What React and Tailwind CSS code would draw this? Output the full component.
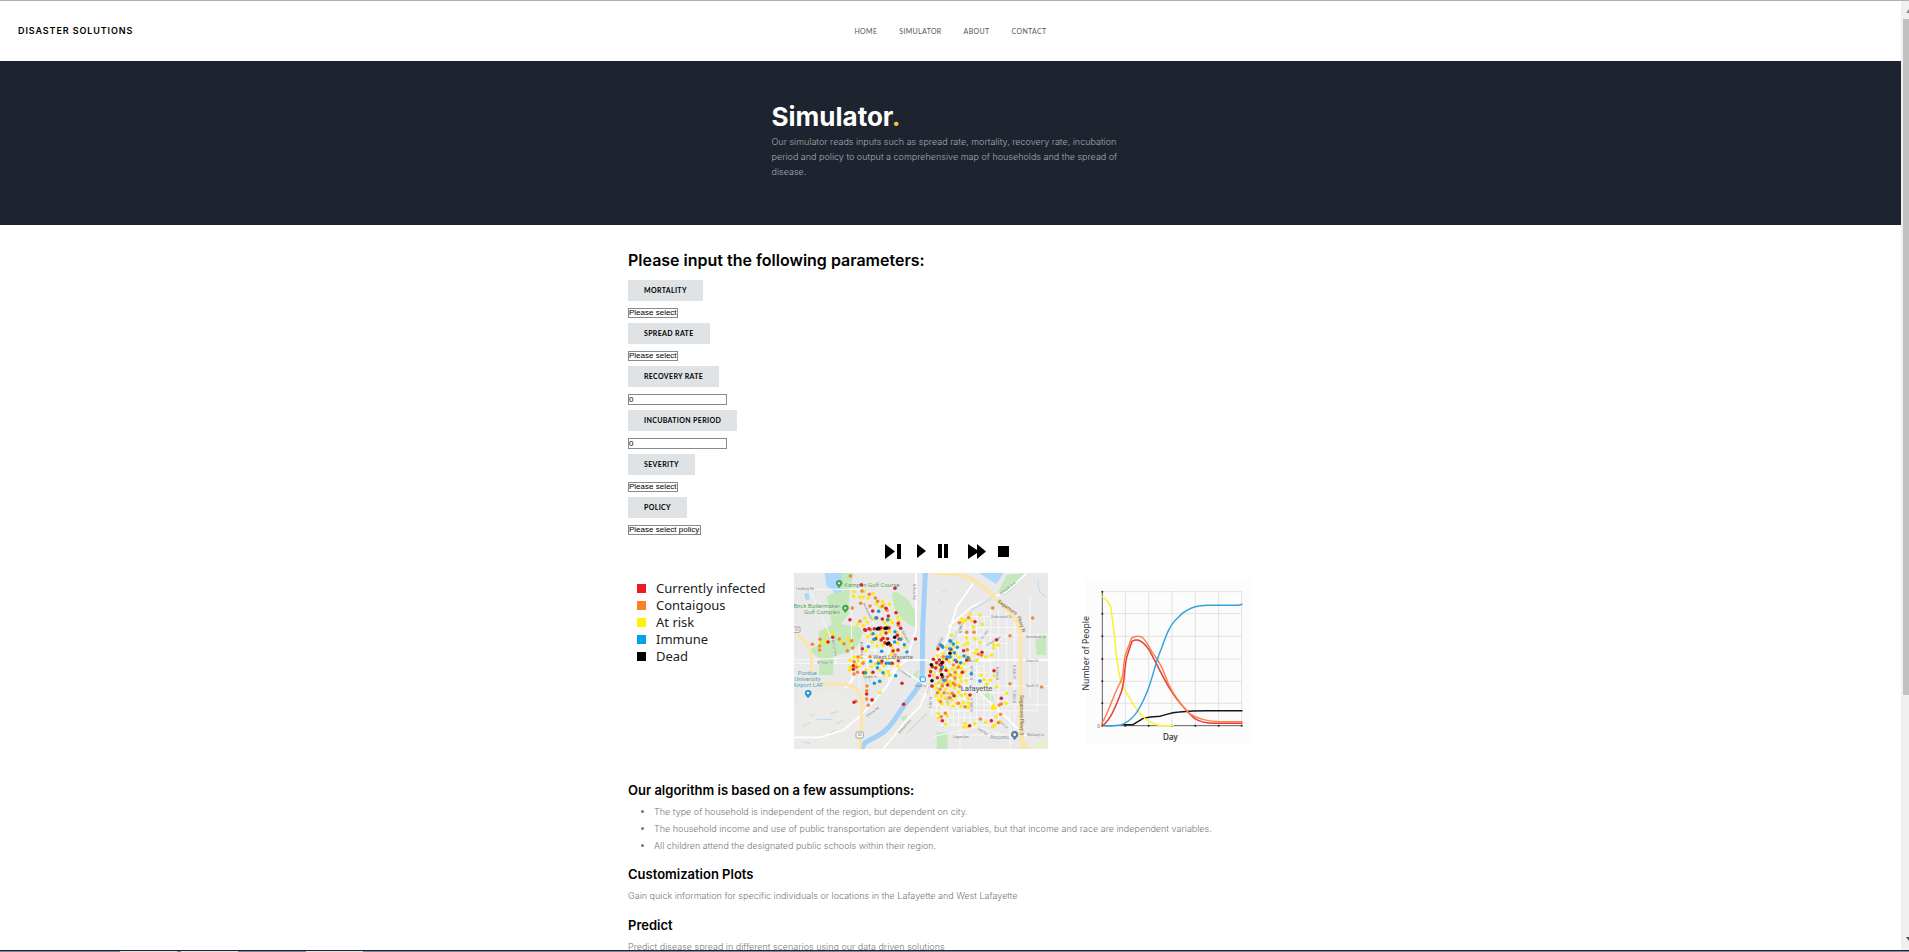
import React from "react";

const NAV = ["Home", "Simulator", "About", "Contact"];

const FIELDS = [
  { id: "mortality", label: "Mortality", placeholder: "Please select" },
  { id: "spread", label: "Spread rate", placeholder: "Please select" },
  { id: "recovery", label: "Recovery rate", value: "0" },
  { id: "incubation", label: "Incubation period", value: "0" },
  { id: "severity", label: "Severity", placeholder: "Please select" },
  { id: "policy", label: "Policy", placeholder: "Please select policy" },
];

const LEGEND = [
  { name: "Currently infected", color: "bg-[#ed1c24]" },
  { name: "Contaigous", color: "bg-[#ff7f27]" },
  { name: "At risk", color: "bg-[#fff200]" },
  { name: "Immune", color: "bg-[#00a2e8]" },
  { name: "Dead", color: "bg-black" },
];

const CONTROLS = [
  { name: "Step", width: 16, space: "mr-4", d: "M0 0L10 7.5L0 15ZM12 0H16V15H12Z" },
  { name: "Play", width: 9, space: "mr-3", d: "M0 0L9 7L0 14Z" },
  { name: "Pause", width: 10, space: "mr-5", d: "M0 0H4V14H0ZM6 0H10V14H6Z" },
  { name: "Fast forward", width: 18, space: "mr-3", d: "M0 0L9 6V0L18 7.5L9 15V9L0 15Z" },
  { name: "Stop", width: 11, space: "mr-0", d: "M0 2H11V13H0Z" },
];

const PEOPLE = [
  {
    fill: "#fde910",
    points: [
      [222,95],[240,112],[252,94],[221,109],[250,112],[279,101],[265,114],[289,132],[307,125],[301,142],[311,133],[329,133],[330,180],[254,175],[262,187],[282,177],[315,187],[353,172],[337,188],[358,183],[322,198],[308,213],[302,223],[290,228],[329,214],[350,218],[272,225],[262,231],[301,240],[315,238],[277,246],[308,256],[290,257],[336,260],[354,250],[366,233],[375,262],[342,270],[258,272],[232,192],[250,197],[137,221],[158,218],[121,250],[136,243],[185,243],[203,236],[210,249],[210,300],[222,292],[235,302],[241,290],[250,305],[237,320],[211,320],[227,312],[258,330],[274,320],[285,312],[296,303],[312,318],[322,298],[333,285],[340,312],[345,295],[354,319],[312,345],[325,335],[300,330],[276,340],[255,345],[300,398],[300,366],[209,330],[287,290],[328,345],
      [570,163],[599,165],[546,176],[557,181],[575,182],[607,193],[581,202],[549,187],[514,226],[559,234],[563,250],[553,254],[586,236],[600,248],[641,254],[655,255],[640,264],[532,248],[520,258],[500,262],[475,266],[490,282],[515,273],[527,282],[538,292],[558,288],[568,293],[590,270],[585,280],[617,290],[635,286],[590,300],[521,300],[507,305],[552,311],[538,314],[490,300],[472,287],[463,300],[469,320],[480,335],[498,323],[505,336],[517,328],[530,325],[543,341],[530,342],[517,348],[540,352],[525,361],[510,365],[498,370],[481,366],[468,372],[458,380],[470,385],[486,380],[497,388],[512,377],[523,384],[535,375],[543,363],[476,397],[468,408],[485,405],[496,415],[508,400],[516,420],[527,411],[536,397],[543,406],[556,402],[565,415],[504,432],[519,439],[530,430],[542,438],[566,430],[567,442],[550,428],[475,420],[486,432],[484,412],[474,460],[474,474],[502,468],[497,493],[555,490],[552,501],[563,500],[585,491],[617,487],[643,496],[648,470],[658,485],[637,445],[645,445],[678,430],[680,400],[619,373],[643,348],[631,360],[612,358],[604,345],[558,362],[650,380],[554,335],[545,325],[558,442],[640,437],[638,500],[460,345],[450,330]
    ],
  },
  {
    fill: "#f58634",
    points: [
      [211,48],[246,93],[268,103],[286,114],[293,124],[242,130],[217,144],[270,138],[307,139],[321,151],[240,184],[272,209],[97,253],[120,238],[119,270],[119,258],[178,237],[192,251],[202,272],[218,264],[215,242],[234,291],[249,310],[222,342],[233,337],[261,378],[260,392],[260,417],[277,419],[265,436],[228,424],[318,206],[355,196],[270,290],[222,305],[304,309],[345,285],[229,322],
      [638,144],[758,174],[538,188],[566,173],[560,217],[582,217],[690,227],[595,283],[605,285],[562,269],[512,290],[520,315],[490,290],[482,332],[503,350],[511,344],[525,354],[535,322],[498,360],[480,388],[540,380],[472,398],[520,370],[517,400],[510,413],[482,425],[492,398],[487,377],[525,375],[535,430],[555,440],[496,460],[484,470],[601,477],[662,463],[658,435],[664,432],[690,371],[785,381],[568,300],[525,337],[655,488],[486,354]
    ],
  },
  {
    fill: "#d9222a",
    points: [
      [244,74],[345,85],[278,153],[348,158],[318,145],[210,179],[290,174],[325,168],[307,177],[355,190],[362,205],[303,203],[299,207],[327,204],[254,209],[257,211],[267,206],[283,206],[318,219],[287,236],[309,235],[323,236],[352,226],[357,237],[331,255],[354,270],[339,273],[247,266],[304,240],[144,246],[158,232],[406,237],[220,317],[220,328],[355,302],[336,310],[366,370],[371,433],[260,402],[276,420],[222,427],[251,338],[279,337],[306,303],[315,248],
      [585,185],[606,277],[650,239],[474,267],[486,258],[513,268],[551,272],[460,298],[478,300],[488,307],[500,297],[457,320],[467,324],[484,316],[484,327],[498,331],[449,347],[472,353],[456,378],[488,350],[522,407],[547,337],[570,405],[642,332],[664,415],[487,482],[569,497],[634,482],[560,300],[530,305],[452,335],[480,314],[470,308],[503,375]
    ],
  },
  {
    fill: "#159bd7",
    points: [
      [296,154],[288,173],[323,179],[345,215],[279,221],[282,238],[265,260],[305,274],[373,254],[381,276],[272,304],[295,310],[319,310],[328,310],[257,338],[309,338],[292,323],[347,347],[283,370],[299,364],[362,238],[344,246],
      [481,255],[510,242],[520,252],[532,262],[509,267],[523,278],[564,293],[542,308],[526,301],[501,291],[552,288],[509,291],[574,341],[492,361],[600,363],[512,244],[488,262],[487,322]
    ],
  },
  {
    fill: "#0b0b0b",
    points: [
      [292,207],[296,205],[315,205],[320,204],[344,232],[326,249],[322,252],[510,280],[486,308],[454,314],[485,344],[456,362]
    ],
  },
];

function CityMap() {
  return (
    <svg
      viewBox="42 39 762 528"
      role="img"
      aria-label="Map of Lafayette and West Lafayette"
      className="block h-[176px] w-[254px] shrink-0"
      fontFamily="Roboto, 'Liberation Sans', sans-serif"
    >
      <rect x="42" y="39" width="762" height="528" fill="#e9e9e9" />
      <path d="M42 430Q120 390 170 395L250 440L245 567H42Z" fill="#edebe8" />
      <path d="M440 39L425 350L385 430L270 567H360L450 440V39Z" fill="#ebeae6" />
      <g fill="#c5e8ba">
        <path d="M180 39H222L215 70L207 110L205 165L160 220L150 160L140 110L165 95Z" />
        <path d="M335 100L350 95L380 115L408 155L405 200L385 193L350 160L340 130Z" />
        <path d="M115 215L165 190L235 200L250 215L235 255L205 280L160 285V345H117V295L85 270L120 255Z" />
        <path d="M680 45L735 39L700 85L675 105L655 95Z" />
        <path d="M765 240L798 225V285H770Z" />
        <path d="M470 517H503V567H470Z" />
        <path d="M605 400L625 390L642 410L635 425L612 420Z" />
        <path d="M362 470L382 465L378 480L365 483Z" />
        <path d="M405 335L418 330L410 360L398 355Z" />
        <path d="M755 553L800 540V567H765Z" fill="#e9efc9" />
      </g>
      <g fill="#aed8fa">
        <path d="M134 39H184V95L168 100L140 78Z" />
        <path d="M72 102L85 98L90 118L78 122Z" />
        <path d="M598 39H672L648 72Z" />
        <path d="M252 350L270 347L272 365L255 368Z" opacity=".6" />
      </g>
      <path d="M436 39L428 210L427 340C425 380 395 405 370 440S330 510 285 532S252 555 245 570" fill="none" stroke="#a3d0f8" strokeWidth="15" />
      <g fill="none" stroke="#b6daf5" strokeWidth="3">
        <path d="M110 478H158M88 463l12 5M68 500l22 -12M150 462l25 -8M70 545l20 6M150 520l15 -10M170 490l20 -8M488 95l12 -6M478 120l8 8M775 60Q770 100 798 110" />
      </g>
      <g fill="none" stroke="#f8f8f8" strokeWidth="3">
        <path d="M42 88H250M90 90L160 250L168 310M42 310H230M42 300L260 292M215 150V370M250 120L285 200L330 300M300 160L390 290M245 230H390M238 250V380M262 210V370M285 230V365M305 250V350M325 250V370M345 240V340M240 270H370M235 290H360M225 325H350M240 345H345" />
        <path d="M455 300V470M470 280V480M487 270V500M503 260V500M520 245V500M536 210V500M553 190V500M570 180V500M590 170V500M612 170V480M632 150V470M655 145V480M680 150V450M704 170V540M750 110V410M772 300V455" />
        <path d="M510 203H720M540 170H725M530 225H804M520 250H680M470 272H640M455 320H610M450 338H620M450 355H650M450 378H804M455 398H680M450 416H620M450 435H800M455 452H775M470 472H660M470 495H690M530 525H690M460 530L590 500L704 535" />
        <path d="M600 280L710 205M495 230L565 180M415 395L500 450L530 500M585 320L740 560M540 567V510M690 450V567" />
      </g>
      <g fill="none" stroke="#fff" strokeWidth="5">
        <path d="M408 39V210L380 300L330 340" />
        <path d="M230 300H804M427 300L640 302" />
        <path d="M580 70L530 140L500 240L455 310M350 320L445 380M350 325L320 380L245 465L190 510L120 532H42M445 380L420 440L380 480L310 567M505 200L575 140L680 95L740 39M590 390L740 530M195 385L225 350" />
      </g>
      <path d="M440 400L480 300L575 150L640 110M440 460L380 520" fill="none" stroke="#d9dcdf" strokeWidth="6" />
      <path d="M42 215Q95 255 95 300V350Q90 373 130 373H195Q245 385 247 430L240 567" fill="none" stroke="#fbe5a8" strokeWidth="9" />
      <path d="M460 40C560 35 590 60 640 108S720 180 722 230V500L728 567" fill="none" stroke="#fbe5a8" strokeWidth="11" />
      <path d="M722 530L745 567" fill="none" stroke="#fbe5a8" strokeWidth="9" />

      <g fill="#7d8084" fontSize="10">
        <text x="48" y="91">Lindberg Rd</text>
        <text x="112" y="313">W State St</text>
        <text x="632" y="174">Underwood St</text>
        <text x="738" y="234">Greenbush St</text>
        <text x="738" y="306">Union St</text>
        <text x="738" y="382">South St</text>
        <text x="520" y="533">Logan Ave</text>
        <text x="742" y="529">McCarty Ln</text>
        <text x="405" y="380">State St</text>
        <text x="555" y="306">Union St</text>
        <text x="250" y="355">Fowler St</text>
        <text x="472" y="372">South St</text>
        <text transform="translate(400 72) rotate(90)">N River Rd</text>
        <text transform="translate(248 130) rotate(64)">Northwestern</text>
        <text transform="translate(360 205) rotate(62)">N Salisbury</text>
        <text transform="translate(155 240) rotate(80)">McCormick</text>
        <text transform="translate(248 298) rotate(-90)">N Russell St</text>
        <text transform="translate(355 330) rotate(35)">E State St</text>
        <text transform="translate(262 472) rotate(-37)">S River Rd</text>
        <text transform="translate(358 522) rotate(-48)">Wabash Ave</text>
        <text transform="translate(662 105) rotate(-38)">Schuyler Ave</text>
        <text transform="translate(622 258) rotate(-30)">Greenbush</text>
        <text transform="translate(608 238) rotate(-55)">N 14th</text>
        <text transform="translate(546 220) rotate(-90)">N 9th St</text>
        <text transform="translate(473 265) rotate(-60)">N 3rd St</text>
        <text transform="translate(457 445) rotate(-90)">S 4th St</text>
        <text transform="translate(507 430) rotate(-90)">S 6th St</text>
        <text transform="translate(571 415) rotate(90)">S 18th St</text>
        <text transform="translate(578 360) rotate(-90)">N 18th St</text>
        <text transform="translate(647 320) rotate(90)">N 26th St</text>
        <text transform="translate(700 315) rotate(90)">N 36th Pl</text>
        <text transform="translate(700 390) rotate(90)">S 36th St</text>
        <text transform="translate(655 485) rotate(40)">Main St</text>
        <text transform="translate(592 507) rotate(35)">Teal Rd</text>
      </g>
      <g fill="#8d7a4b" fontSize="15" fontWeight="500">
        <text transform="translate(652 126) rotate(36)">Sagamore</text>
        <text transform="translate(711 170) rotate(70)">Pkwy N</text>
        <text transform="translate(719 405) rotate(90)">Sagamore Pkwy S</text>
      </g>
      <g fill="#5b9c68" fontSize="18" stroke="#e6f1e2" strokeWidth="2" paintOrder="stroke">
        <text x="193" y="82">Kampen Golf Course</text>
        <text x="180" y="145" textAnchor="end">Birck Boilermaker</text>
        <text x="180" y="162" textAnchor="end">Golf Complex</text>
      </g>
      <g fill="#4d9fcc" fontSize="18" stroke="#ecebe8" strokeWidth="2" paintOrder="stroke" textAnchor="middle">
        <text x="82" y="346">Purdue</text>
        <text x="82" y="363">University</text>
        <text x="84" y="380">Airport LAF</text>
      </g>
      <g>
        <path d="M177 85L168 73A10 10 0 1 1 187 73Z" fill="#43a35a" />
        <path d="M196 159L187 147A10 10 0 1 1 206 147Z" fill="#43a35a" />
        <path d="M84 415L75 403A10 10 0 1 1 94 403Z" fill="#1e96d2" />
        <path d="M704 541L694 528A11 11 0 1 1 714 528Z" fill="#5a7f9c" />
        <g fill="#fff">
          <circle cx="177" cy="70" r="3" />
          <circle cx="196" cy="144" r="3" />
          <circle cx="84" cy="399" r="4" />
          <circle cx="704" cy="524" r="4" />
        </g>
        <rect x="421" y="351" width="15" height="14" rx="2" fill="#e9f7fd" stroke="#27a9e1" strokeWidth="3" />
      </g>
      <g fill="#fff" stroke="#777" strokeWidth="2">
        <rect x="40" y="201" width="20" height="16" rx="3" />
        <rect x="228" y="516" width="22" height="18" rx="4" />
      </g>
      <g fill="#555" fontSize="11">
        <text x="44" y="213">52</text>
        <text x="233" y="529">52</text>
      </g>

      {PEOPLE.map((group) => (
        <g key={group.fill} fill={group.fill}>
          {group.points.map(([x, y], i) => (
            <circle key={i} cx={x} cy={y} r="5.3" />
          ))}
        </g>
      ))}

      <g fill="#6d7074" stroke="#efefee" strokeWidth="2" paintOrder="stroke">
        <text x="279" y="298" fontSize="18">West Lafayette</text>
        <text x="542" y="394" fontSize="23" fill="#54575b">Lafayette</text>
        <text x="630" y="536" fontSize="17" fill="#7f92a3">Arconic</text>
      </g>
    </svg>
  );
}

function SpreadChart() {
  return (
    <svg
      viewBox="60 55 516 501"
      role="img"
      aria-label="Number of people over time"
      className="block h-[167px] w-[172px] shrink-0"
      fontFamily="'Noto Sans', 'Open Sans', sans-serif"
    >
      <rect x="76" y="58" width="497" height="495" fill="#fcfcfc" />
      <path
        d="M127 96H545M127 162H545M127 230H545M127 298H545M127 365H545M127 431H545M196 96V498M266 96V498M336 96V498M406 96V498M476 96V498M545 96V498"
        fill="none"
        stroke="#dcdcdf"
        strokeWidth="2.5"
      />
      <path d="M127 96V498H545" fill="none" stroke="#606060" strokeWidth="3" />
      <g fill="#222">
        {[96, 162, 230, 298, 365, 431, 498].map((y) => (
          <circle key={y} cx="127" cy={y} r="3" />
        ))}
        {[196, 266, 336, 406, 476, 545].map((x) => (
          <circle key={x} cx={x} cy="498" r="3" />
        ))}
      </g>
      <g fill="none" strokeWidth="4.5" strokeLinecap="round" strokeLinejoin="round">
        <path d="M190 495H219Q230 487 240 482C255 469 280 473 299 470C325 463 335 458 357 457Q400 453 440 453H546" stroke="#161616" />
        <path d="M127 111Q137 117 143 126Q153 137 154 155L162 215L168 278L177 340Q180 362 194 388Q215 430 241 463Q268 492 300 498H340" stroke="#fbf12d" />
        <path d="M129 497C151 480 165 445 178 412C197 375 190 338 200 293L216 245Q230 237 243 245Q263 258 275 285C300 332 315 365 333 393C355 429 380 454 403 476Q430 492 465 491H546" stroke="#e83a40" />
        <path d="M125 492C145 460 158 410 180 370C195 347 187 312 198 280L215 235Q228 227 246 232C257 241 263 255 275 275C300 308 310 330 324 370C340 405 360 432 388 462C415 479 440 486 480 486H546" stroke="#f98348" />
        <path d="M135 499H152L182 496C220 482 238 452 259 402C278 360 283 315 305 265C319 224 330 195 353 175Q370 155 395 145Q415 137 445 137H536L546 134" stroke="#31a6dc" />
      </g>
      <text transform="translate(86 281) rotate(-90)" textAnchor="middle" fontSize="26" fill="#333">
        Number of People
      </text>
      <text x="331" y="541" textAnchor="middle" fontSize="24" fill="#333" stroke="#333" strokeWidth=".6">
        Day
      </text>
      <text x="112" y="505" fontSize="14" fill="#666">
        0
      </text>
    </svg>
  );
}

function Field({ field }) {
  const labelId = field.id + "-label";
  return (
    <div className="flex flex-col items-start gap-[7px]">
      <button
        id={labelId}
        type="button"
        className="h-[21px] bg-[#dfe3e6] px-4 font-[Lato,sans-serif] text-[7px] leading-[21px] font-bold tracking-wider text-black uppercase"
      >
        {field.label}
      </button>
      {field.placeholder ? (
        <select
          aria-labelledby={labelId}
          className="block h-[10px] appearance-none border border-[#8a8a8a] bg-white font-['Liberation_Sans',sans-serif] text-[8px] leading-[8px] text-black"
        >
          <option>{field.placeholder}</option>
        </select>
      ) : (
        <input
          type="text"
          aria-labelledby={labelId}
          defaultValue={field.value}
          className="block h-[11px] w-[99px] border border-[#8a8a8a] bg-white font-['Liberation_Sans',sans-serif] text-[8px] leading-[9px] text-black"
        />
      )}
    </div>
  );
}

function Scrollbar() {
  return (
    <div aria-hidden="true" className="flex w-2 shrink-0 flex-col items-end justify-between bg-[#f0f0f0]">
      <svg viewBox="0 0 3 18" className="h-[18px] w-[3px] shrink-0">
        <path d="M0 12L3 8V12Z" fill="#8a8a8a" />
      </svg>
      <div className="flex w-[6px] flex-1 flex-col">
        <div className="h-[74%] bg-[#c1c1c1]" />
      </div>
      <svg viewBox="0 0 3 18" className="h-[18px] w-[3px] shrink-0">
        <path d="M0 5L3 9V5Z" fill="#505050" />
      </svg>
    </div>
  );
}

export default function App() {
  return (
    <div className="flex h-screen flex-col overflow-hidden border-t border-[#b0b0b0] bg-white font-[Inter,sans-serif]">
      <div className="flex min-h-0 flex-1">
        <div className="min-w-0 flex-1 overflow-hidden">
          <header className="grid h-[60px] grid-cols-[1fr_auto_1fr] items-center px-[18px]">
            <a href="#home" className="text-[9px] font-semibold tracking-widest text-black uppercase">
              Disaster Solutions
            </a>
            <nav className="flex gap-[22px] font-[Lato,sans-serif] text-[7px] leading-[10px] tracking-wider text-[#555] uppercase">
              {NAV.map((item) => (
                <a key={item} href={"#" + item.toLowerCase()}>
                  {item}
                </a>
              ))}
            </nav>
          </header>

          <section className="bg-[#1e242f] pt-10 pb-[46px]">
            <div className="mx-auto w-[358px]">
              <h1 className="text-[26px] leading-8 font-bold text-white">
                Simulator<span className="text-[#f2c938]">.</span>
              </h1>
              <p className="pt-px text-[9px] leading-[15px] font-light text-[#a6a9ad]">
                Our simulator reads inputs such as spread rate, mortality, recovery rate, incubation period and policy to
                output a comprehensive map of households and the spread of disease.
              </p>
            </div>
          </section>

          <main className="mx-auto w-[645px] pt-[23px]">
            <h2 className="text-[16px] leading-6 font-semibold text-black">Please input the following parameters:</h2>

            <form className="flex flex-col gap-[5px] pt-2">
              {FIELDS.map((field) => (
                <Field key={field.id} field={field} />
              ))}
            </form>

            <div className="flex items-center justify-center pt-[9px] pr-2 pb-[14px]">
              {CONTROLS.map((c) => (
                <button key={c.name} type="button" aria-label={c.name} className={c.space}>
                  <svg viewBox={"0 0 " + c.width + " 15"} width={c.width} height="15" className="block">
                    <path d={c.d} fill="#000" />
                  </svg>
                </button>
              ))}
            </div>

            <div className="flex items-start">
              <ul className="w-[166px] shrink-0 pt-[7px] pl-[9px]">
                {LEGEND.map((item) => (
                  <li key={item.name} className="flex h-[17px] items-center gap-[10px]">
                    <span className={"size-[9px] " + item.color} />
                    <span className="font-['Noto_Sans',sans-serif] text-[13px] leading-[17px] whitespace-nowrap text-[#222]">
                      {item.name}
                    </span>
                  </li>
                ))}
              </ul>
              <CityMap />
              <div className="pt-[5px] pl-8">
                <SpreadChart />
              </div>
            </div>

            <section className="pt-[33px]">
              <h3 className="text-[13px] leading-4 font-semibold text-black">
                Our algorithm is based on a few assumptions:
              </h3>
              <ul className="list-disc pt-[5px] pl-[26px] text-[9px] leading-[17px] font-light text-[#777]">
                <li>The type of household is independent of the region, but dependent on city.</li>
                <li className="whitespace-nowrap">
                  The household income and use of public transportation are dependent variables, but that income and race
                  are independent variables.
                </li>
                <li>All children attend the designated public schools within their region.</li>
              </ul>
            </section>
            <section className="pt-3">
              <h3 className="text-[13px] leading-4 font-semibold text-black">Customization Plots</h3>
              <p className="pt-[5px] text-[9px] leading-[17px] font-light text-[#777]">
                Gain quick information for specific individuals or locations in the Lafayette and West Lafayette
              </p>
            </section>
            <section className="pt-[13px]">
              <h3 className="text-[13px] leading-4 font-semibold text-black">Predict</h3>
              <p className="pt-[5px] text-[9px] leading-[17px] font-light text-[#777]">
                Predict disease spread in different scenarios using our data driven solutions
              </p>
            </section>
          </main>
        </div>
        <Scrollbar />
      </div>
      <div aria-hidden="true" className="flex h-[2px] shrink-0 border-t border-[#1b2634] bg-[#7d8894]">
        <div className="ml-[120px] w-[57px] bg-[#e4e4e4]" />
        <div className="ml-1 w-[57px] bg-[#e4e4e4]" />
        <div className="ml-[68px] w-[57px] bg-[#e4e4e4]" />
      </div>
    </div>
  );
}
